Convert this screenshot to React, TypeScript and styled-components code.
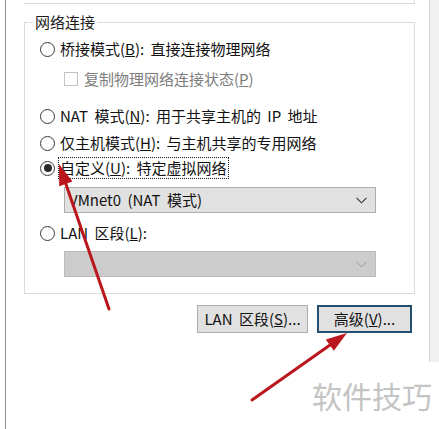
import React from "react";
import styled, { createGlobalStyle } from "styled-components";

const GlobalStyle = createGlobalStyle`
  html, body { margin: 0; padding: 0; background: #fff; }
  body { font-family: "Noto Sans CJK SC", "Noto Sans", sans-serif; color: #000; }
`;

const Screen = styled.div`
  position: relative;
  width: 439px;
  height: 429px;
  overflow: hidden;
  display: flex;
  background: #fff;
  font-size: 15px;
  word-spacing: 3px;
`;

const LeftEdge = styled.div`
  flex: none;
  width: 5px;
  border-right: 1px solid #8f8f8f;
`;

const Main = styled.div`
  flex: none;
  width: 423px;
  box-sizing: border-box;
  padding: 0 14px 0 18px;
  display: flex;
  flex-direction: column;
`;

const PrevGroupEnd = styled.div`
  height: 3px;
  border-bottom: 1px solid #dcdcdc;
  border-right: 1px solid #dcdcdc;
`;

const GroupBox = styled.div`
  position: relative;
  margin-top: 18px;
  border: 1px solid #dcdcdc;
  padding: 15px 0 16px 15px;
  display: flex;
  flex-direction: column;
`;

const Legend = styled.span`
  position: absolute;
  top: -11px;
  left: 8px;
  padding: 0 2px;
  line-height: 20px;
  background: #fff;
  color: #1a1a1a;
`;

const Row = styled.div<{ $mt: number; $indent?: boolean }>`
  display: flex;
  align-items: center;
  height: 22px;
  margin-top: ${(p) => p.$mt}px;
  margin-left: ${(p) => (p.$indent ? 24 : 0)}px;
  white-space: nowrap;
  line-height: 20px;
`;

const Radio = styled.span<{ $checked?: boolean }>`
  flex: none;
  width: 15px;
  height: 15px;
  box-sizing: border-box;
  border-radius: 50%;
  border: 1px solid #3a3a3a;
  background: #fff;
  margin-right: 5px;
  display: flex;
  align-items: center;
  justify-content: center;
  &::after {
    content: "";
    display: ${(p) => (p.$checked ? "block" : "none")};
    width: 8px;
    height: 8px;
    border-radius: 50%;
    background: #2b2b2b;
  }
`;

const CheckBox = styled.span`
  flex: none;
  width: 14px;
  height: 14px;
  box-sizing: border-box;
  border: 1px solid #c4c4c4;
  background: #fff;
  margin-right: 6px;
`;

const Label = styled.span<{ $disabled?: boolean; $focused?: boolean }>`
  color: ${(p) => (p.$disabled ? "#7d7d7d" : "#111")};
  outline: ${(p) => (p.$focused ? "1px dotted #222" : "none")};
  outline-offset: 0px;
  padding: ${(p) => (p.$focused ? "0 1px" : "0")};
  margin-left: ${(p) => (p.$focused ? "-1px" : "0")};
`;

const Select = styled.div<{ $mt: number; $disabled?: boolean }>`
  margin-top: ${(p) => p.$mt}px;
  margin-left: 24px;
  width: 312px;
  height: 26px;
  box-sizing: border-box;
  border: 1px solid ${(p) => (p.$disabled ? "#bcbcbc" : "#adadad")};
  background: ${(p) => (p.$disabled ? "#cccccc" : "#e1e1e1")};
  color: #111;
  display: flex;
  align-items: center;
  justify-content: space-between;
  padding: 0 8px 0 4px;
  line-height: 20px;
  white-space: nowrap;
`;

const Buttons = styled.div`
  display: flex;
  justify-content: flex-end;
  gap: 9px;
  margin-top: 11px;
  margin-right: 3px;
`;

const Button = styled.div<{ $w: number; $default?: boolean }>`
  width: ${(p) => p.$w}px;
  height: 28px;
  box-sizing: border-box;
  border: ${(p) => (p.$default ? "2px solid #24506f" : "1px solid #adadad")};
  background: #e1e1e1;
  display: flex;
  align-items: center;
  justify-content: center;
  color: #111;
  white-space: nowrap;
  line-height: 20px;
`;

const RightBand = styled.div`
  flex: none;
  width: 10px;
  height: 362px;
  box-sizing: border-box;
  background: #f0f0f0;
  border-left: 1px solid #d6d6d6;
`;

const Watermark = styled.div`
  position: absolute;
  left: 312px;
  top: 378px;
  font-size: 30px;
  line-height: 34px;
  word-spacing: 0;
  color: #c4c4c4;
  white-space: nowrap;
`;

const Overlay = styled.svg`
  position: absolute;
  left: 0;
  top: 0;
  pointer-events: none;
`;

const Chevron = ({ color }: { color: string }) => (
  <svg width="11" height="7" viewBox="0 0 11 7">
    <path d="M0.5 0.8 L5.5 5.8 L10.5 0.8" fill="none" stroke={color} strokeWidth="1.1" />
  </svg>
);

function arrowHead(x1: number, y1: number, x2: number, y2: number, len: number, half: number) {
  const dx = x2 - x1;
  const dy = y2 - y1;
  const d = Math.hypot(dx, dy);
  const ux = dx / d;
  const uy = dy / d;
  const bx = x2 - ux * len;
  const by = y2 - uy * len;
  const px = -uy * half;
  const py = ux * half;
  return {
    points: `${x2},${y2} ${bx + px},${by + py} ${bx - px},${by - py}`,
    bx: x2 - ux * (len - 2),
    by: y2 - uy * (len - 2),
  };
}

const Arrow = ({ x1, y1, x2, y2 }: { x1: number; y1: number; x2: number; y2: number }) => {
  const h = arrowHead(x1, y1, x2, y2, 21, 7);
  return (
    <g>
      <line x1={x1} y1={y1} x2={h.bx} y2={h.by} stroke="#bb161d" strokeWidth="3" strokeLinecap="round" />
      <polygon points={h.points} fill="#bb161d" />
    </g>
  );
};

export default function App() {
  return (
    <>
      <GlobalStyle />
      <Screen>
        <LeftEdge />
        <Main>
          <PrevGroupEnd />
          <GroupBox>
            <Legend>网络连接</Legend>
            <Row $mt={0}>
              <Radio />
              <Label>
                桥接模式(<u>B</u>): 直接连接物理网络
              </Label>
            </Row>
            <Row $mt={8} $indent>
              <CheckBox />
              <Label $disabled>
                复制物理网络连接状态(<u>P</u>)
              </Label>
            </Row>
            <Row $mt={15}>
              <Radio />
              <Label>
                NAT 模式(<u>N</u>): 用于共享主机的 IP 地址
              </Label>
            </Row>
            <Row $mt={5}>
              <Radio />
              <Label>
                仅主机模式(<u>H</u>): 与主机共享的专用网络
              </Label>
            </Row>
            <Row $mt={3}>
              <Radio $checked />
              <Label $focused>
                自定义(<u>U</u>): 特定虚拟网络
              </Label>
            </Row>
            <Select $mt={8}>
              <span>VMnet0 (NAT 模式)</span>
              <Chevron color="#333" />
            </Select>
            <Row $mt={9}>
              <Radio />
              <Label>
                LAN 区段(<u>L</u>):
              </Label>
            </Row>
            <Select $mt={7} $disabled>
              <span />
              <Chevron color="#a8a8a8" />
            </Select>
          </GroupBox>
          <Buttons>
            <Button $w={111}>
              LAN 区段(<u>S</u>)...
            </Button>
            <Button $w={95} $default>
              高级(<u>V</u>)...
            </Button>
          </Buttons>
        </Main>
        <RightBand />
        <Watermark>软件技巧</Watermark>
        <Overlay width="439" height="429" viewBox="0 0 439 429">
          <Arrow x1={109} y1={309} x2={59} y2={164} />
          <Arrow x1={252} y1={400} x2={347} y2={333} />
        </Overlay>
      </Screen>
    </>
  );
}
